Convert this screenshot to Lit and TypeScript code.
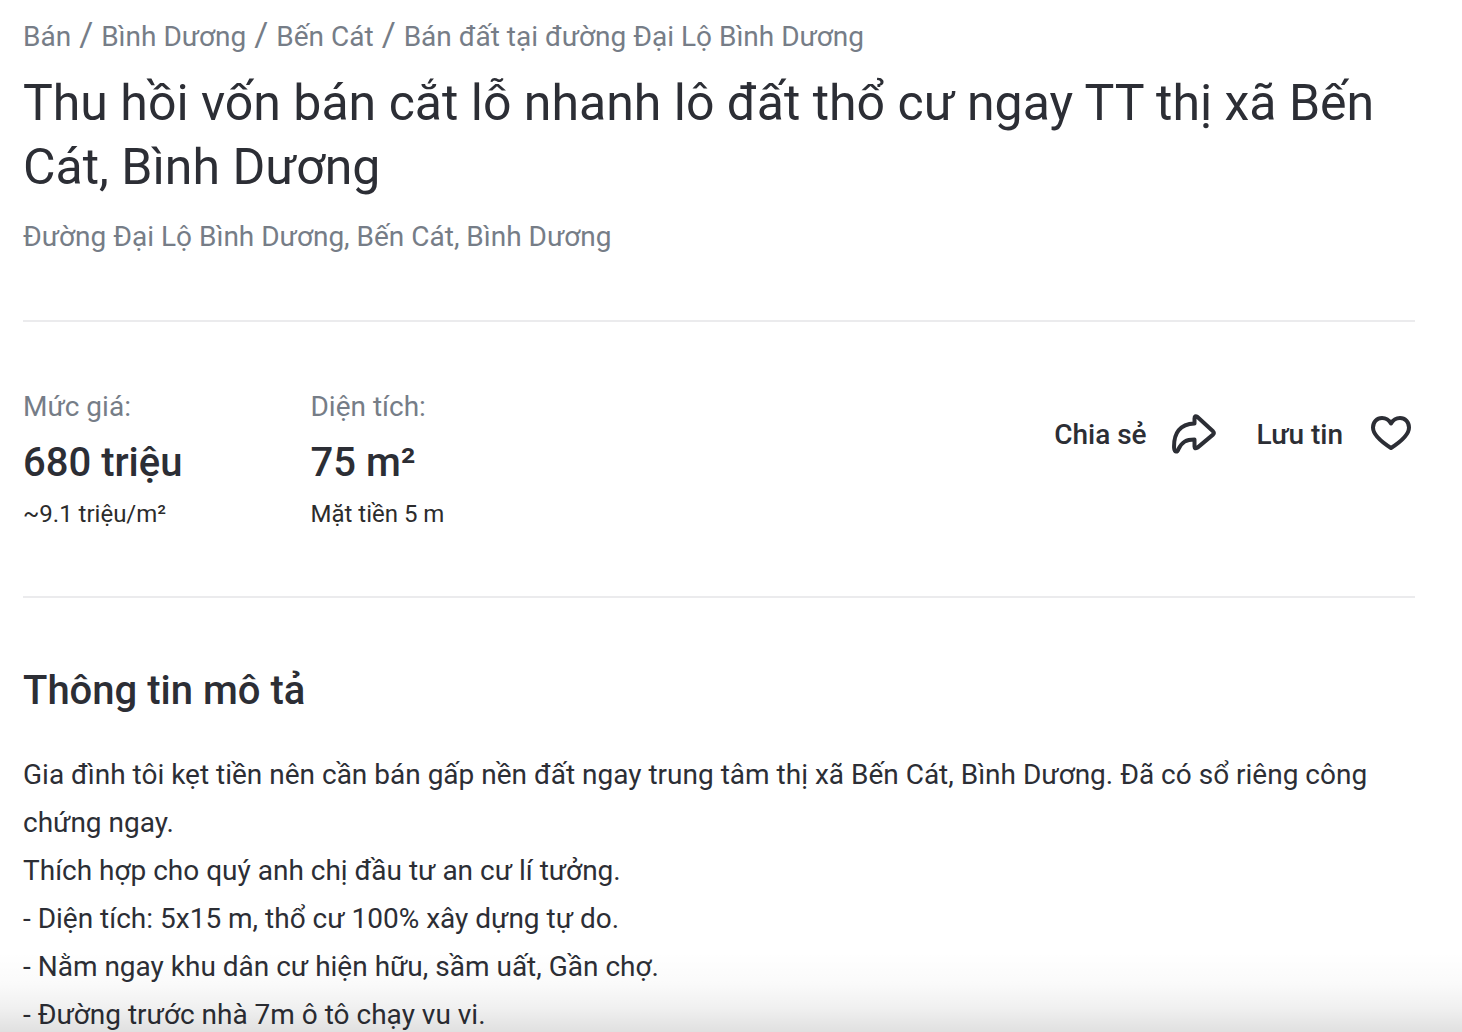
import { LitElement, html, css } from "lit";
import { customElement } from "lit/decorators.js";

@customElement("app-root")
export class AppRoot extends LitElement {
  static styles = css`
    :host {
      display: block;
      position: relative;
      height: 100vh;
      overflow: hidden;
      box-sizing: border-box;
      padding: 17px 47px 0 23px;
      background: #fff;
      color: #2c2e35;
      font-family: Roboto, "Noto Sans", sans-serif;
      font-size: 28px;
      line-height: 40px;
    }
    h1, h2, p, dl, dd, ol { margin: 0; padding: 0; }
    .crumbs { display: flex; flex-wrap: wrap; list-style: none; color: #767d87; }
    .crumbs li { display: flex; align-items: baseline; }
    .crumbs li + li::before { content: "/"; margin: 0 8px; font-size: 34px; line-height: 32px; }
    a { color: inherit; text-decoration: none; }
    h1 { margin-top: 14px; font-size: 50px; line-height: 64px; font-weight: 400; }
    .address { margin-top: 18px; color: #767d87; }
    .summary {
      display: flex;
      align-items: flex-start;
      justify-content: space-between;
      margin-top: 63px;
      padding: 65px 0 66px;
      border: solid #ebebed;
      border-width: 2px 0;
    }
    .facts { display: flex; gap: 128px; }
    dt { color: #767d87; }
    .value { margin-top: 12px; font-size: 40px; line-height: 48px; font-weight: 500; }
    .note { margin-top: 11px; font-size: 24px; line-height: 32px; color: #2c2c2c; }
    .actions { display: flex; gap: 40px; padding-top: 24px; }
    button {
      display: flex;
      align-items: center;
      gap: 24px;
      padding: 0;
      border: 0;
      background: none;
      color: inherit;
      font: inherit;
      font-weight: 500;
      line-height: 48px;
      cursor: pointer;
    }
    svg { display: block; height: 48px; fill: none; stroke: currentColor; stroke-width: 4; stroke-linejoin: round; stroke-linecap: round; }
    h2 { margin-top: 65px; font-size: 40px; line-height: 56px; font-weight: 500; }
    .description { margin-top: 32px; line-height: 48px; }
    .fade {
      position: absolute;
      inset: auto 0 0 0;
      height: 80px;
      background: linear-gradient(rgba(0, 0, 0, 0), rgba(0, 0, 0, 0.02) 40%, rgba(0, 0, 0, 0.06) 70%, rgba(0, 0, 0, 0.12));
      pointer-events: none;
    }
  `;

  private crumbs = ["Bán", "Bình Dương", "Bến Cát", "Bán đất tại đường Đại Lộ Bình Dương"];

  private facts = [
    { label: "Mức giá:", value: "680 triệu", note: "~9.1 triệu/m²" },
    { label: "Diện tích:", value: "75 m²", note: "Mặt tiền 5 m" },
  ];

  private description = [
    "Gia đình tôi kẹt tiền nên cần bán gấp nền đất ngay trung tâm thị xã Bến Cát, Bình Dương. Đã có sổ riêng công chứng ngay.",
    "Thích hợp cho quý anh chị đầu tư an cư lí tưởng.",
    "- Diện tích: 5x15 m, thổ cư 100% xây dựng tự do.",
    "- Nằm ngay khu dân cư hiện hữu, sầm uất, Gần chợ.",
    "- Đường trước nhà 7m ô tô chạy vu vi.",
  ];

  render() {
    return html`
      <main>
        <nav><ol class="crumbs">${this.crumbs.map((c) => html`<li><a href="#">${c}</a></li>`)}</ol></nav>
        <h1>Thu hồi vốn bán cắt lỗ nhanh lô đất thổ cư ngay TT thị xã Bến Cát, Bình Dương</h1>
        <p class="address">Đường Đại Lộ Bình Dương, Bến Cát, Bình Dương</p>
        <section class="summary">
          <dl class="facts">
            ${this.facts.map((f) => html`<div>
              <dt>${f.label}</dt>
              <dd class="value">${f.value}</dd>
              <dd class="note">${f.note}</dd>
            </div>`)}
          </dl>
          <div class="actions">
            <button type="button">Chia sẻ
              <svg width="46" viewBox="2 0 46 48" aria-hidden="true"><path d="M25.5 12.5V7.5Q25.5 4 28.5 6L44 20.3Q45.6 22 44 23.6L28.5 36.6Q25.5 38.5 25.5 35.5V28.5C17 28.5 13 31 9.5 38Q8.5 40.8 7 40.6Q5.3 40.3 5.1 37C4.5 22 11 13 25.5 12.5Z" /></svg>
            </button>
            <button type="button">Lưu tin
              <svg width="48" viewBox="0 0 48 48" aria-hidden="true"><path d="M24 37C17 32.500 6 25 6 16.500C6 11 10 7 15 7C19 7 22 9 24 12.500C26 9 29 7 33 7C38 7 42 11 42 16.500C42 25 31 32.500 24 37Z" /></svg>
            </button>
          </div>
        </section>
        <section>
          <h2>Thông tin mô tả</h2>
          <div class="description">${this.description.map((d) => html`<p>${d}</p>`)}</div>
        </section>
      </main>
      <div class="fade"></div>
    `;
  }
}
